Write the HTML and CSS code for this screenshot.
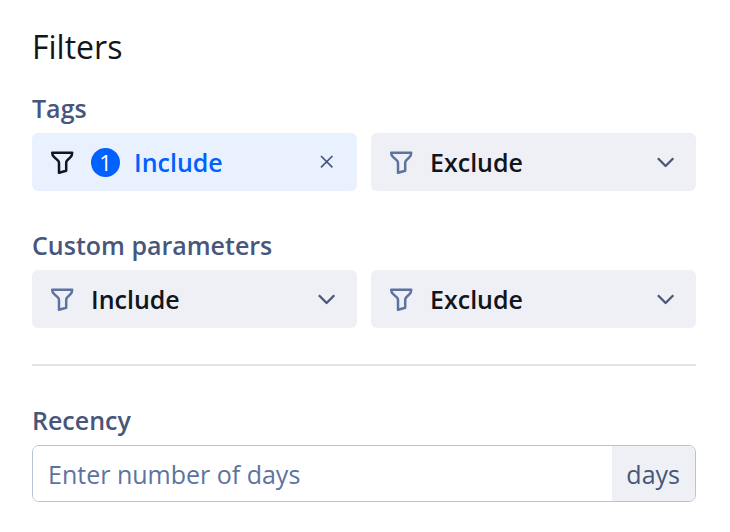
FILE: index.html
```html
<!DOCTYPE html>
<html lang="en">
<head>
<meta charset="utf-8">
<title>Filters</title>
<link rel="stylesheet" href="styles.css">
</head>
<body>
<svg class="sprite" aria-hidden="true">
  <symbol id="funnel" viewBox="0 0 24 24"><path d="M2.200 2.800H22.200C22.200 4.800 21.500 6.100 20.500 7.100L17.200 10.400Q16.200 11.500 16.200 13V20.800L9 22.800V13Q9 11.500 7.800 10.400L4.200 7.100C2.900 6.100 2.200 4.800 2.200 2.800Z"/></symbol>
  <symbol id="chevron" viewBox="0 0 24 24"><path d="M3.900 8.300L11.600 16L19.300 8.300"/></symbol>
  <symbol id="close" viewBox="0 0 24 24"><path d="M6 6L17.400 17.400M17.400 6L6 17.400"/></symbol>
</svg>
<main class="filters">
  <h1 class="title">Filters</h1>
  <section class="group">
    <h2 class="label">Tags</h2>
    <div class="pair">
      <div class="filter filter-active">
        <button class="filter-main" type="button">
          <svg class="icon"><use href="#funnel"/></svg>
          <span class="count">1</span>
          <span>Include</span>
        </button>
        <button class="clear" type="button" aria-label="Clear"><svg class="icon"><use href="#close"/></svg></button>
      </div>
      <button class="filter" type="button">
        <svg class="icon"><use href="#funnel"/></svg>
        <span>Exclude</span>
        <svg class="icon chevron"><use href="#chevron"/></svg>
      </button>
    </div>
  </section>
  <section class="group">
    <h2 class="label">Custom parameters</h2>
    <div class="pair">
      <button class="filter" type="button">
        <svg class="icon"><use href="#funnel"/></svg>
        <span>Include</span>
        <svg class="icon chevron"><use href="#chevron"/></svg>
      </button>
      <button class="filter" type="button">
        <svg class="icon"><use href="#funnel"/></svg>
        <span>Exclude</span>
        <svg class="icon chevron"><use href="#chevron"/></svg>
      </button>
    </div>
  </section>
  <hr class="divider">
  <div class="group">
    <label class="label" for="recency">Recency</label>
    <div class="field">
      <input class="input" id="recency" type="text" inputmode="numeric" placeholder="Enter number of days">
      <span class="unit">days</span>
    </div>
  </div>
</main>
</body>
</html>
```
FILE: styles.css
```css
* {
  box-sizing: border-box;
}

body {
  margin: 0;
  background: #fff;
  color: #11151c;
  font-family: "Open Sans", sans-serif;
  font-size: 25px;
}

.sprite {
  position: absolute;
  width: 0;
  height: 0;
}

.filters {
  padding: 24px 34px 30px 32px;
}

.title {
  margin: 0 0 21px;
  font-size: 32px;
  font-weight: 400;
  line-height: 46px;
}

.label {
  display: block;
  margin: 0 0 8px;
  color: #47567a;
  font-size: 25px;
  font-weight: 600;
  line-height: 34px;
}

.group + .group {
  margin-top: 37px;
}

.pair {
  display: grid;
  grid-template-columns: 1fr 1fr;
  gap: 14px;
}

.filter {
  display: flex;
  align-items: center;
  gap: 17px;
  height: 58px;
  padding: 0 18px;
  border: 0;
  border-radius: 6px;
  background: #eff0f5;
  color: #11151c;
  font: 600 25px/34px "Open Sans", sans-serif;
}

.filter-main,
.clear {
  display: flex;
  align-items: center;
  gap: 17px;
  padding: 0;
  border: 0;
  background: none;
  color: inherit;
  font: inherit;
}

.filter-active {
  background: #e9f1ff;
  color: #0061ff;
}

.filter-active .icon {
  color: #11151c;
}

.clear {
  margin-left: auto;
}

.filter-active .clear .icon {
  color: #47567a;
  stroke-width: 1.7;
}

.icon {
  flex: none;
  width: 24px;
  height: 24px;
  fill: none;
  stroke: currentColor;
  stroke-linejoin: round;
  stroke-width: 2.5;
  color: #5d739f;
}

.icon.chevron {
  margin-left: auto;
  stroke-width: 2.3;
  color: #47567a;
}

.count {
  width: 29px;
  height: 29px;
  margin-right: -3px;
  border-radius: 50%;
  background: #0061ff;
  color: #fff;
  font-size: 22px;
  font-weight: 400;
  line-height: 29px;
  text-align: center;
}

.divider {
  height: 2px;
  margin: 36px 0 37px;
  border: 0;
  background: #dfe3ea;
}

.field {
  display: flex;
  height: 57px;
  overflow: hidden;
  border: 1px solid #bac3d6;
  border-radius: 7px;
}

.input {
  flex: 1;
  min-width: 0;
  padding: 0 15px;
  border: 0;
  background: #fff;
  color: #11151c;
  font: 400 25px/34px "Open Sans", sans-serif;
}

.input::placeholder {
  color: #5d739f;
  opacity: 1;
}

.unit {
  padding: 0 15px 0 14px;
  background: #eff0f5;
  color: #47567a;
  line-height: 57px;
}
```
